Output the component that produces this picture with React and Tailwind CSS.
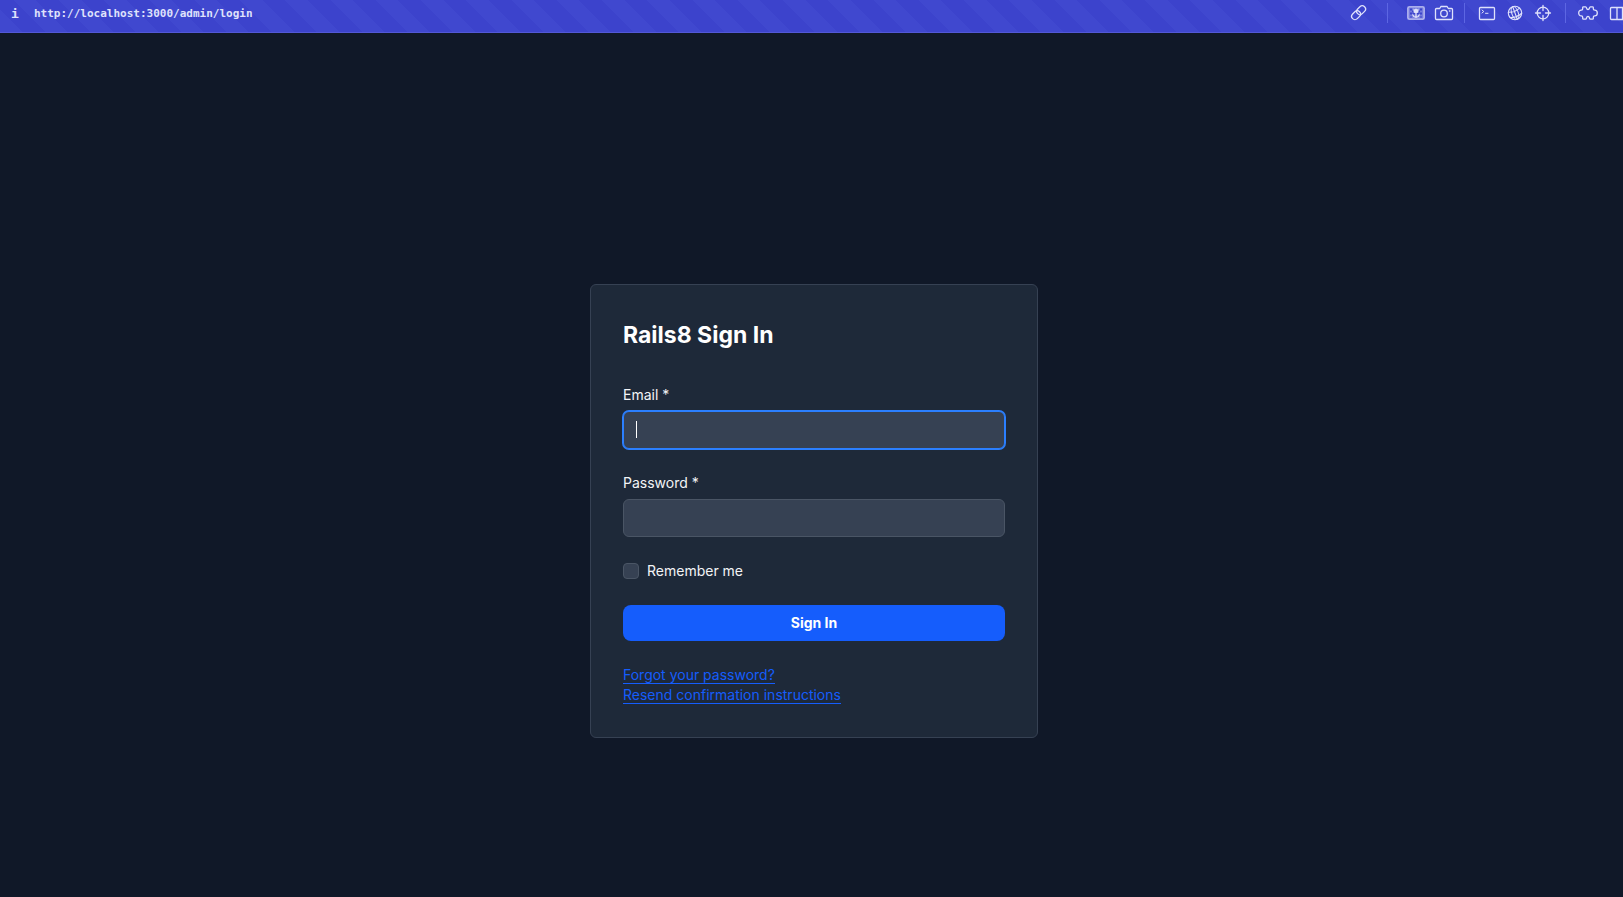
const icon = {
  width: 20,
  height: 20,
  viewBox: "0 0 20 20",
  fill: "none",
  stroke: "currentColor",
  strokeWidth: 1.3,
  strokeLinecap: "round",
  strokeLinejoin: "round",
  "aria-hidden": true,
};

function LinkIcon() {
  return (
    <svg {...icon}>
      <rect x="7.2" y="3.9" width="9.8" height="6.6" rx="3.3" transform="rotate(-45 12.1 7.2)" />
      <rect x="2.2" y="8.9" width="9.8" height="6.6" rx="3.3" transform="rotate(-45 7.1 12.2)" />
    </svg>
  );
}

function PictureIcon() {
  return (
    <svg {...icon}>
      <rect x="1.8" y="3.8" width="16.400" height="12.400" rx="1.500" fill="currentColor" fillOpacity="0.35" strokeOpacity="0.65" strokeWidth="1.600" />
      <path d="M4 5.500h2v2H4zM4 9.500h2v2H4zM14 5.500h2v2h-2zM14 9.500h2v2h-2zM6 7.500h1.500v2H6zM12.500 7.500H14v2h-1.500zM4 13.500h2v1H4zM14 13.500h2v1h-2zM6.500 10h7v1.500h-7z" fill="#3d44cc" stroke="none" />
      <path d="M7.500 5.500l1.300 1L10 5.200l1.200 1.300 1.300-1v2.500a2.500 2.300 0 0 1-5 0z" fill="currentColor" stroke="none" />
      <path d="M10 10v4M6.800 11.800c.4 1.500 1.600 2.300 3.200 2.500 1.600-.2 2.800-1 3.200-2.500" />
    </svg>
  );
}

function CameraIcon() {
  return (
    <svg {...icon}>
      <path d="M1.500 6.500a1 1 0 0 1 1-1h3.200l1.200-2h6.200l1.200 2h3.200a1 1 0 0 1 1 1v9a1 1 0 0 1-1 1h-15a1 1 0 0 1-1-1z" />
      <circle cx="10" cy="10.500" r="3.300" />
      <path d="M15.500 8h.5" />
    </svg>
  );
}

function TerminalIcon() {
  return (
    <svg {...icon}>
      <rect x="2.500" y="4.500" width="15" height="12" rx="1" />
      <path d="M5 7l1.800 1.500L5 10M8.500 10.300H11" strokeWidth="1" />
    </svg>
  );
}

function GlobeIcon() {
  return (
    <svg {...icon} strokeWidth="1.1">
      <circle cx="10" cy="10" r="6.700" />
      <g transform="rotate(-20 10 10)">
        <ellipse cx="10" cy="10" rx="3.200" ry="6.700" />
        <path d="M10 3.300v13.400M4 7c3.500 1.500 8.500 1.500 12 0M3.800 12.500c3.500 1.500 8.900 1.500 12.400 0" />
      </g>
    </svg>
  );
}

function CrosshairIcon() {
  return (
    <svg {...icon}>
      <circle cx="10" cy="10" r="5.800" />
      <path d="M10 2.500v5M10 12.500v5M2.500 10h5M12.500 10h5" />
    </svg>
  );
}

function PuzzleIcon() {
  return (
    <svg {...icon}>
      <path d="M5.500 3.800H7.600C9 3.800 8 6.600 10 6.600S11 3.800 12.400 3.800h2.100c.6 0 .8.300.8.800v1.200c0 1 .5 1.300 1.400 1.300 1.600 0 2.600 1.300 2.600 2.900s-1 2.900-2.600 2.900c-.9 0-1.400.3-1.400 1.300v1.200c0 .5-.2.800-.8.800h-2.100c-1.400 0-.4-2.800-2.400-2.800s-1 2.800-2.400 2.800H5.500c-.6 0-.8-.3-.8-.8v-1.200c0-1-.5-1.300-1.400-1.300C1.700 12.900.7 11.600.7 10s1-2.900 2.600-2.900c.9 0 1.400-.3 1.400-1.300V4.600c0-.5.2-.8.8-.8z" />
    </svg>
  );
}

function PanelsIcon() {
  return (
    <svg {...icon} width="15" viewBox="0 0 15 20">
      <path d="M17 4.500H3.500a1 1 0 0 0-1 1v10a1 1 0 0 0 1 1H17M9 4.500v12M14.500 4.500v12" />
    </svg>
  );
}

function ToolButton({ label, children }) {
  return (
    <button type="button" aria-label={label} className="block shrink-0">
      {children}
    </button>
  );
}

function Divider() {
  return <span className="h-5 w-px shrink-0 bg-[#5d66e3]" />;
}

function AddressBar() {
  return (
    <header className="flex h-[33px] items-center justify-between overflow-hidden border-b border-[#5358d6] bg-[#3c43cc] bg-[repeating-linear-gradient(45deg,#4048cf_0px,#4048cf_16px,#3c43cc_16px,#3c43cc_32px)] pb-1.5 text-[#dfe1fb]">
      <div className="flex items-center pt-0.5 pl-[11px] font-['DejaVu_Sans_Mono',monospace] text-[11px] leading-4 font-bold">
        <span className="w-[23px] text-[13px]">i</span>
        <span>http://localhost:3000/admin/login</span>
      </div>
      <div className="flex items-center gap-2.5">
        <div className="flex items-center gap-[18px]">
          <ToolButton label="Copy link"><LinkIcon /></ToolButton>
          <Divider />
          <div className="flex items-center gap-2">
            <ToolButton label="Preview"><PictureIcon /></ToolButton>
            <ToolButton label="Screenshot"><CameraIcon /></ToolButton>
          </div>
        </div>
        <div className="flex items-center gap-3">
          <Divider />
          <div className="flex items-center gap-2">
            <ToolButton label="Console"><TerminalIcon /></ToolButton>
            <ToolButton label="Network"><GlobeIcon /></ToolButton>
            <ToolButton label="Inspect"><CrosshairIcon /></ToolButton>
          </div>
          <Divider />
          <div className="flex items-center gap-2.5">
            <ToolButton label="Extensions"><PuzzleIcon /></ToolButton>
            <ToolButton label="Split view"><PanelsIcon /></ToolButton>
          </div>
        </div>
      </div>
    </header>
  );
}

const field =
  "peer block h-[38px] w-full rounded-md border border-[#4a5565] bg-[#364153] px-3 text-white caret-white outline-none focus:border-[#2b7fff] focus:ring-1 focus:ring-[#2b7fff]";

export default function App() {
  return (
    <div className="min-h-screen bg-[#101828] font-['Inter',sans-serif] text-sm text-gray-100">
      <AddressBar />
      <main className="flex justify-center pt-[251px] pl-[5px]">
        <form className="w-full max-w-md rounded-md border border-[#364153] bg-[#1e2939] p-8">
          <h1 className="mb-8 text-[23px] leading-9 font-bold text-white">Rails8 Sign In</h1>
          <div className="flex flex-col gap-6">
            <div className="flex flex-col gap-1.5">
              <label htmlFor="email">Email *</label>
              <div className="relative">
                <input id="email" type="email" placeholder=" " autoFocus className={field} />
                <span className="pointer-events-none absolute top-2.5 left-[13px] hidden h-[17px] w-px bg-white peer-focus:peer-placeholder-shown:block" />
              </div>
            </div>
            <div className="flex flex-col gap-1.5">
              <label htmlFor="password">Password *</label>
              <input id="password" type="password" className={field} />
            </div>
            <div className="flex items-center gap-2">
              <input
                id="remember"
                type="checkbox"
                className="size-4 appearance-none rounded border border-[#4a5565] bg-[#364153] checked:bg-[#155dfc]"
              />
              <label htmlFor="remember">Remember me</label>
            </div>
            <button type="submit" className="h-9 w-full rounded-lg bg-[#155dfc] font-bold text-white">
              Sign In
            </button>
            <div className="text-[#155dfc]">
              <div><a href="#forgot" className="border-b border-[#155dfc]">Forgot your password?</a></div>
              <div><a href="#resend" className="border-b border-[#155dfc]">Resend confirmation instructions</a></div>
            </div>
          </div>
        </form>
      </main>
    </div>
  );
}
